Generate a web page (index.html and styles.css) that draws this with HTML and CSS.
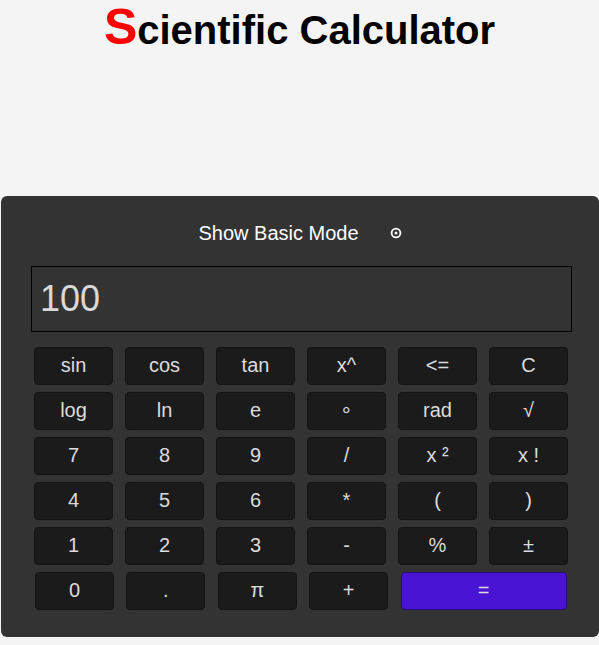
FILE: index.html
```html
<!DOCTYPE html>
<html lang="en">
<head>
<meta charset="utf-8">
<title>Scientific Calculator</title>
<link rel="stylesheet" href="styles.css">
</head>
<body>
<h1 class="title"><span class="title-first">S</span>cientific Calculator</h1>
<div class="calc">
  <div class="mode">
    <span class="mode-label">Show Basic Mode</span>
    <svg class="mode-icon" width="12" height="12" viewBox="0 0 12 12" aria-hidden="true">
      <circle cx="6" cy="6" r="4.4" fill="none" stroke="#fff" stroke-width="1.8"/>
      <circle cx="6" cy="6" r="1.5" fill="#fff"/>
    </svg>
  </div>
  <div class="display">100</div>
  <div class="keys">
    <button class="key">sin</button>
    <button class="key">cos</button>
    <button class="key">tan</button>
    <button class="key">x^</button>
    <button class="key">&lt;=</button>
    <button class="key">C</button>
    <button class="key">log</button>
    <button class="key">ln</button>
    <button class="key">e</button>
    <button class="key">&#8728;</button>
    <button class="key">rad</button>
    <button class="key">&#8730;</button>
    <button class="key">7</button>
    <button class="key">8</button>
    <button class="key">9</button>
    <button class="key">/</button>
    <button class="key">x &#178;</button>
    <button class="key">x !</button>
    <button class="key">4</button>
    <button class="key">5</button>
    <button class="key">6</button>
    <button class="key">*</button>
    <button class="key">(</button>
    <button class="key">)</button>
    <button class="key">1</button>
    <button class="key">2</button>
    <button class="key">3</button>
    <button class="key">-</button>
    <button class="key">%</button>
    <button class="key">&#177;</button>
  </div>
  <div class="keys-last">
    <button class="key">0</button>
    <button class="key">.</button>
    <button class="key">&#960;</button>
    <button class="key">+</button>
    <button class="key key-equals">=</button>
  </div>
</div>
</body>
</html>
```
FILE: styles.css
```css
html, body {
  margin: 0;
  padding: 0;
}
body {
  background: #f4f4f4;
  font-family: "Liberation Sans", Arial, sans-serif;
  width: 599px;
  overflow: hidden;
}
.title {
  margin: 0;
  padding-top: 1px;
  text-align: center;
  font-size: 40px;
  line-height: 52px;
  font-weight: bold;
  color: #000;
  height: 55px;
}
.title-first {
  color: #ff0000;
  font-size: 50px;
}
.calc {
  margin: 140px 0 0 1px;
  width: 598px;
  box-sizing: border-box;
  background: #333333;
  border-radius: 6px;
  padding: 25px 0 27px 30px;
}
.mode {
  display: flex;
  justify-content: center;
  align-items: center;
  gap: 31px;
  padding-right: 30px;
  height: 24px;
  line-height: 24px;
  color: #fff;
  font-size: 20px;
}
.mode-icon {
  display: block;
}
.display {
  margin-top: 21px;
  width: 541px;
  height: 66px;
  box-sizing: border-box;
  border: 1px solid #000;
  padding-left: 8px;
  font-size: 36px;
  line-height: 64px;
  color: #d9d9d9;
}
.keys {
  margin: 15px 0 0 3px;
  display: grid;
  grid-template-columns: repeat(6, 79px);
  grid-auto-rows: 38px;
  column-gap: 12px;
  row-gap: 7px;
}
.keys-last {
  margin: 7px 0 0 4px;
  display: flex;
  column-gap: 12.4px;
  height: 38px;
}
.key {
  width: 79px;
  height: 38px;
  margin: 0;
  padding: 0 0 1px;
  box-sizing: border-box;
  background: #1b1b1b;
  border: 1px solid #141414;
  border-radius: 4px;
  color: #dcdcdc;
  font-family: "Liberation Sans", Arial, sans-serif;
  font-size: 20px;
  line-height: 35px;
  text-align: center;
}
.key-equals {
  width: 166px;
  background: #4a14d4;
  border-color: #2a0b7a;
}
```
